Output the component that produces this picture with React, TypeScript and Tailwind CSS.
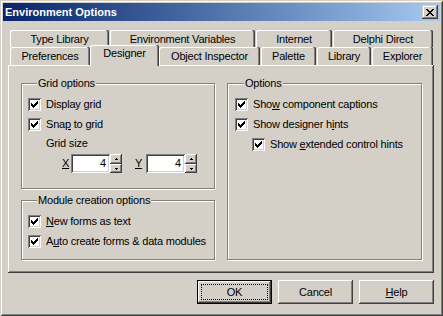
import React from "react";

const raised =
  "shadow-[inset_-1px_-1px_#404040,inset_1px_1px_#fff,inset_-2px_-2px_#808080]";
const sunken =
  "shadow-[inset_1px_1px_#808080,inset_-1px_-1px_#fff,inset_2px_2px_#404040,inset_-2px_-2px_#d4d0c8]";
const tabEdge =
  "shadow-[inset_-1px_0_#404040,inset_-2px_0_#808080,inset_1px_1px_#fff] rounded-t-[2px]";

const row1 = [
  { label: "Type Library", cls: "w-[99px]" },
  { label: "Environment Variables", cls: "w-[145px] ml-[1px]" },
  { label: "Internet", cls: "w-[76px] ml-[1px]" },
  { label: "Delphi Direct", cls: "w-[100px] ml-[1px]" },
];

const row2 = [
  { label: "Preferences", cls: "w-[80px]" },
  { label: "Designer", cls: "w-[69px]", active: true },
  { label: "Object Inspector", cls: "w-[101px]" },
  { label: "Palette", cls: "w-[55px] ml-[1px]" },
  { label: "Library", cls: "w-[54px] ml-[1px]" },
  { label: "Explorer", cls: "w-[61px] ml-[1px]" },
];

function Check() {
  return (
    <span className={`w-[13px] h-[13px] bg-white shrink-0 flex items-center justify-center ${sunken}`}>
      <svg width="7" height="7" viewBox="0 0 7 7" shapeRendering="crispEdges">
        <path
          d="M6 0h1v1h-1z M5 1h2v1h-2z M0 2h1v1h-1z M4 2h3v1h-3z M0 3h2v1h-2z M3 3h3v1h-3z M0 4h5v1h-5z M1 5h3v1h-3z M2 6h1v1h-1z"
          fill="#000"
        />
      </svg>
    </span>
  );
}

function CheckRow({ children, indent = "" }: { children: React.ReactNode; indent?: string }) {
  return (
    <div className={`flex items-center h-[20px] ${indent}`}>
      <Check />
      <span className="ml-[5px] whitespace-nowrap">{children}</span>
    </div>
  );
}

function Legend({ children }: { children: React.ReactNode }) {
  return (
    <span className="-mt-[7px] ml-[9px] px-[1px] self-start bg-[#d4d0c8] leading-[13px] whitespace-nowrap">
      {children}
    </span>
  );
}

function Spin() {
  return (
    <div className="flex flex-col w-[12px] h-[19px]">
      <div className={`h-[10px] bg-[#d4d0c8] flex items-center justify-center ${raised}`}>
        <svg width="3" height="2" viewBox="0 0 3 2" shapeRendering="crispEdges">
          <path d="M1 0h1v1h-1z M0 1h3v1h-3z" fill="#000" />
        </svg>
      </div>
      <div className={`h-[9px] bg-[#d4d0c8] flex items-center justify-center ${raised}`}>
        <svg width="3" height="2" viewBox="0 0 3 2" shapeRendering="crispEdges">
          <path d="M0 0h3v1h-3z M1 1h1v1h-1z" fill="#000" />
        </svg>
      </div>
    </div>
  );
}

function NumBox() {
  return (
    <div className="flex">
      <div className={`w-[39px] h-[19px] bg-white flex items-center justify-end pr-[4px] ${sunken}`}>4</div>
      <Spin />
    </div>
  );
}

function Btn({ children, def = false }: { children: React.ReactNode; def?: boolean }) {
  if (def) {
    return (
      <div className="w-[75px] h-[24px] border border-black">
        <div className={`h-full bg-[#d4d0c8] p-[3px] ${raised}`}>
          <div className="h-full border border-dotted border-black flex items-center justify-center">
            {children}
          </div>
        </div>
      </div>
    );
  }
  return (
    <div className={`w-[75px] h-[24px] bg-[#d4d0c8] flex items-center justify-center ${raised}`}>
      {children}
    </div>
  );
}

export default function App() {
  return (
    <div
      className={`w-[443px] h-[316px] bg-[#d4d0c8] p-[3px] flex flex-col text-[11px] leading-[13px] tracking-[-0.2px] text-black font-['Liberation_Sans',Arial,sans-serif] shadow-[inset_1px_1px_#d4d0c8,inset_-1px_-1px_#404040,inset_2px_2px_#fff,inset_-2px_-2px_#808080]`}
    >
      {/* title */}
      <div className="h-[18px] flex items-center justify-between pl-[2px] pr-[2px] bg-gradient-to-r from-[#0a246a] to-[#a6caf0]">
        <span className="text-white font-bold tracking-normal">Environment Options</span>
        <div className="w-[16px] h-[14px] bg-[#d4d0c8] flex items-center justify-center shadow-[inset_-1px_-1px_#404040,inset_1px_1px_#d4d0c8,inset_-2px_-2px_#808080,inset_2px_2px_#fff]">
          <svg width="8" height="7" viewBox="0 0 8 7" shapeRendering="crispEdges">
            <path
              d="M0 0h2v1h-2z M6 0h2v1h-2z M1 1h2v1h-2z M5 1h2v1h-2z M2 2h4v1h-4z M3 3h2v1h-2z M2 4h4v1h-4z M1 5h2v1h-2z M5 5h2v1h-2z M0 6h2v1h-2z M6 6h2v1h-2z"
              fill="#000"
            />
          </svg>
        </div>
      </div>

      {/* tabs */}
      <div className="mt-[9px] ml-[7px] flex h-[17px]">
        {row1.map((t) => (
          <div key={t.label} className={`${t.cls} h-[17px] pt-[3px] text-center whitespace-nowrap ${tabEdge}`}>
            {t.label}
          </div>
        ))}
      </div>
      <div className="ml-[7px] flex h-[18px]">
        {row2.map((t) =>
          t.active ? (
            <div
              key={t.label}
              className={`${t.cls} relative z-10 -mt-[2px] h-[21px] pt-[2px] bg-[#d4d0c8] text-center whitespace-nowrap ${tabEdge}`}
            >
              {t.label}
            </div>
          ) : (
            <div key={t.label} className={`${t.cls} h-[18px] pt-[3px] text-center whitespace-nowrap ${tabEdge}`}>
              {t.label}
            </div>
          ),
        )}
      </div>

      {/* page */}
      <div className={`ml-[5px] w-[426px] h-[208px] pt-[18px] pl-[13px] flex gap-[12px] ${raised}`}>
        <div className="flex flex-col">
          <div className="w-[194px] h-[106px] border border-[#808080] shadow-[inset_1px_1px_#fff,1px_1px_#fff] flex flex-col pl-[6px]">
            <Legend>Grid options</Legend>
            <div className="mt-[4px]">
              <CheckRow>Display grid</CheckRow>
              <CheckRow>
                Sna<span className="underline">p</span> to grid
              </CheckRow>
              <div className="h-[18px] flex items-center pl-[18px]">Grid size</div>
              <div className="mt-[2px] flex items-center pl-[34px]">
                <span className="underline w-[9px]">X</span>
                <NumBox />
                <span className="underline w-[11px] ml-[13px]">Y</span>
                <NumBox />
              </div>
            </div>
          </div>
          <div className="mt-[11px] w-[194px] h-[60px] border border-[#808080] shadow-[inset_1px_1px_#fff,1px_1px_#fff] flex flex-col pl-[6px]">
            <Legend>Module creation options</Legend>
            <div className="mt-[4px]">
              <CheckRow>
                <span className="underline">N</span>ew forms as text
              </CheckRow>
              <CheckRow>
                A<span className="underline">u</span>to create forms &amp; data modules
              </CheckRow>
            </div>
          </div>
        </div>
        <div className="w-[195px] h-[177px] border border-[#808080] shadow-[inset_1px_1px_#fff,1px_1px_#fff] flex flex-col pl-[7px]">
          <Legend>Options</Legend>
          <div className="mt-[4px]">
            <CheckRow>
              Sho<span className="underline">w</span> component captions
            </CheckRow>
            <CheckRow>
              Show designer h<span className="underline">i</span>nts
            </CheckRow>
            <CheckRow indent="pl-[17px]">
              Show <span className="underline">e</span>xtended control hints
            </CheckRow>
          </div>
        </div>
      </div>

      {/* buttons */}
      <div className="ml-[5px] w-[426px] mt-[7px] flex justify-end gap-[6px]">
        <Btn def>OK</Btn>
        <Btn>Cancel</Btn>
        <Btn>
          <span>
            <span className="underline">H</span>elp
          </span>
        </Btn>
      </div>
    </div>
  );
}
